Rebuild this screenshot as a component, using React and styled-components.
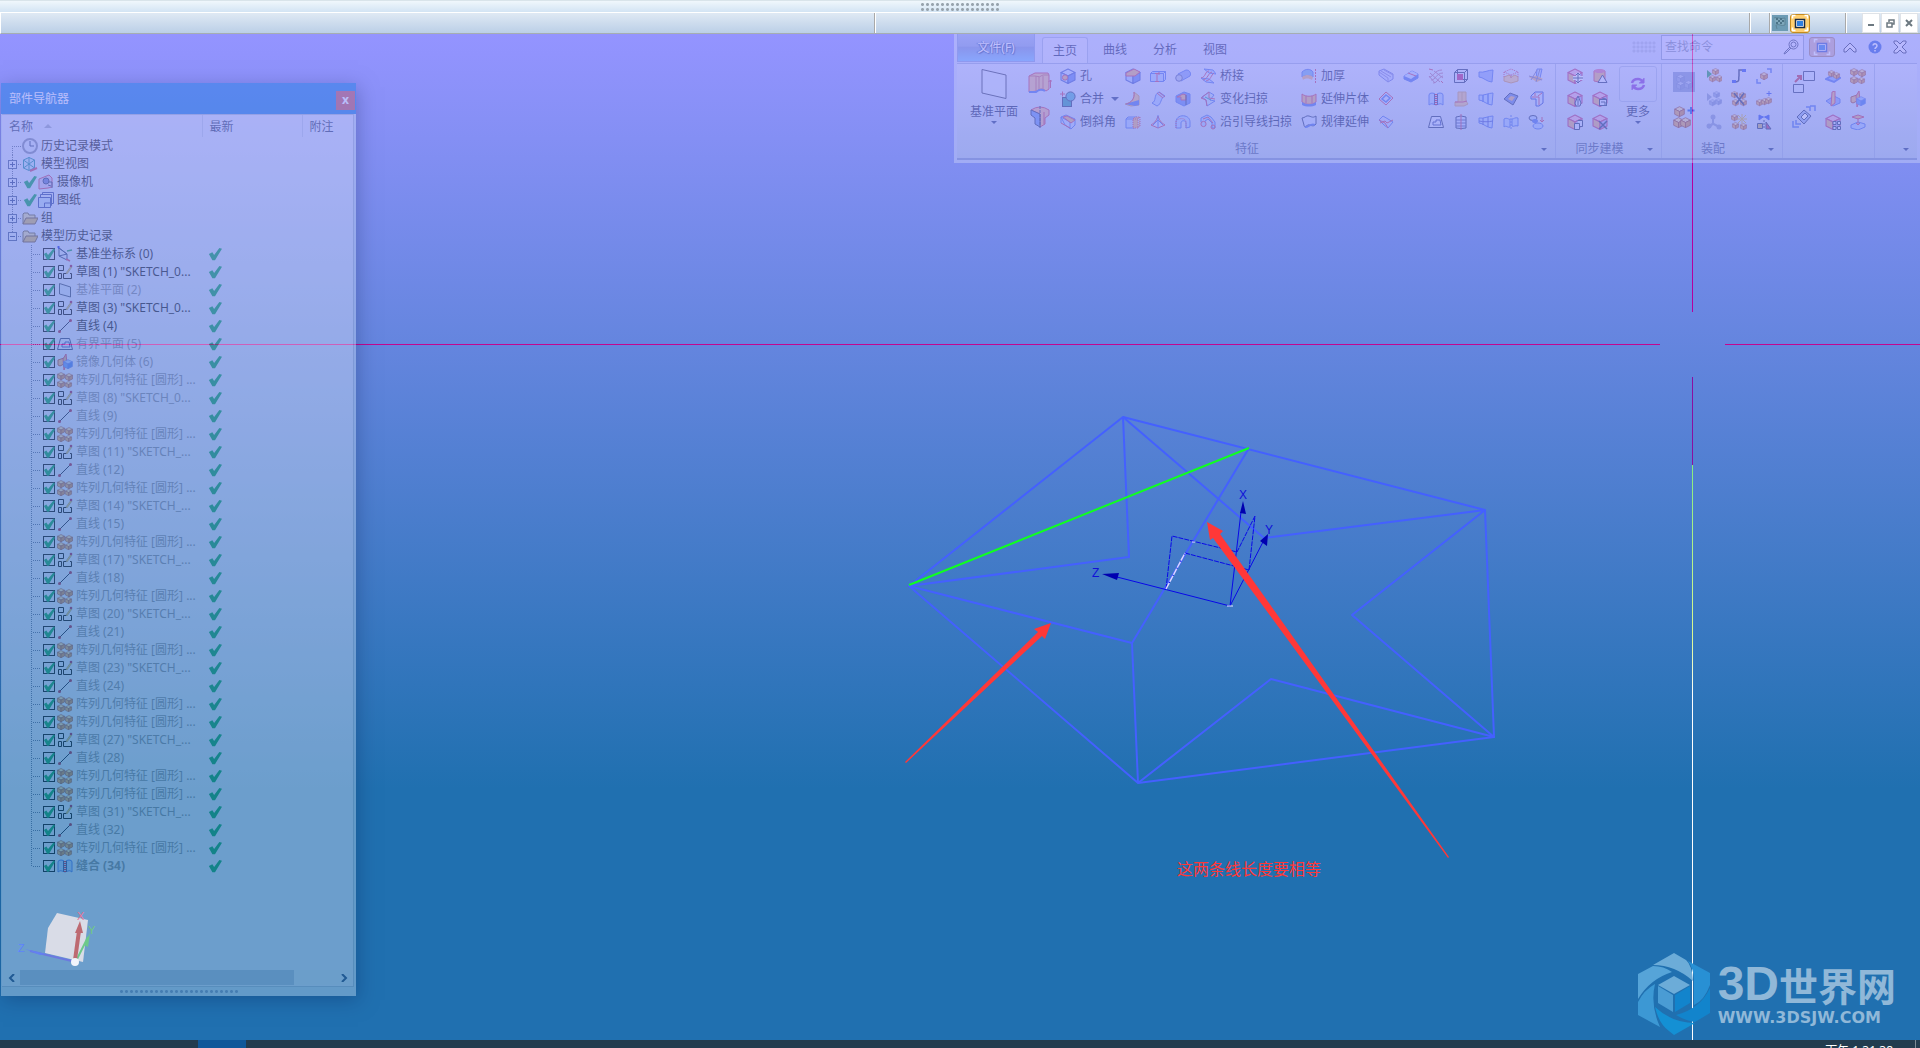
import React from "react";
import styled, { createGlobalStyle, css } from "styled-components";

const GlobalStyle = createGlobalStyle`
  * { box-sizing: border-box; }
  body {
    margin: 0;
    overflow: hidden;
    font-family: "Noto Sans", "Noto Sans CJK SC", sans-serif;
    font-size: 12px;
    line-height: 18px;
  }
  button, input { font: inherit; color: inherit; }
  button { background: none; border: 0; padding: 0; margin: 0; }
  svg { display: block; }
`;

/* ---------- frame ---------- */

const Page = styled.div`
  display: flex;
  flex-direction: column;
  height: 100vh;
`;

const TopStrip = styled.header`
  display: flex;
  justify-content: center;
  align-items: center;
  height: 12px;
  border-top: 1px solid #d9e4ea;
  background: linear-gradient(#f0f7fc, #d3e4f4);
`;

const Grip = styled.span`
  display: block;
  width: ${(p) => p.$cols * p.$step}px;
  height: ${(p) => p.$rows * p.$step}px;
  background-image: radial-gradient(circle, ${(p) => p.$color} 1px, transparent 2px);
  background-size: ${(p) => p.$step}px ${(p) => p.$step}px;
`;

const BarStrip = styled.div`
  display: flex;
  height: 22px;
  border-top: 1px solid #fff;
  border-left: 1px solid #fff;
  border-bottom: 1px solid #a5adb2;
  background: linear-gradient(#dfe9f4, #bbcfe7);
`;

const BarPane = styled.div`
  display: flex;
  align-items: center;
  gap: 2px;
  padding: 0 1px;
  flex: ${(p) => p.$flex || "none"};
  width: ${(p) => (p.$width ? p.$width + "px" : "auto")};
  border-right: ${(p) => (p.$last ? "0" : "1px solid #a9a9a9")};
  border-left: ${(p) => (p.$first ? "0" : "1px solid #fff")};
`;

const FlagButton = styled.button`
  width: 16px;
  height: 16px;
  background: #6d9bb4;
`;

const FullButton = styled.button`
  display: flex;
  align-items: center;
  justify-content: center;
  width: ${(p) => p.$w}px;
  height: ${(p) => p.$h}px;
  border: 1px solid ${(p) => p.$edge};
  border-radius: 3px;
  background: ${(p) => p.$fill};
`;

const WindowButtons = styled.div`
  display: flex;
  gap: 1px;
  padding-right: 2px;
`;

const WindowButton = styled.button`
  display: flex;
  align-items: center;
  justify-content: center;
  width: 18px;
  height: 20px;
  background: #fff;
  border: 1px solid #dfe3e8;
`;

const Viewport = styled.main`
  position: relative;
  flex: 1;
  min-height: 0;
  overflow: hidden;
  background: linear-gradient(#9494ff, #2070b0 75%);
`;

const Scene = styled.svg`
  position: absolute;
  inset: 0;
  width: 100%;
  height: 100%;
`;

const Note = styled.p`
  position: absolute;
  left: 1177px;
  top: 823px;
  margin: 0;
  font-size: 16px;
  line-height: 24px;
  color: #ff3838;
`;

const Watermark = styled.div`
  position: absolute;
  right: 24px;
  bottom: 5px;
  display: flex;
  align-items: center;
  gap: 8px;
`;

const WatermarkText = styled.div`
  display: flex;
  flex-direction: column;
  gap: 3px;
  color: #90b8d8;
  font-weight: 700;
`;

const WatermarkName = styled.span`
  display: flex;
  align-items: center;
  font-family: "Noto Sans CJK SC", sans-serif;
  font-size: 39px;
  line-height: 44px;
  b { font-family: "Liberation Sans", sans-serif; font-size: 48px; }
`;

const WatermarkUrl = styled.span`
  font-family: "DejaVu Sans", sans-serif;
  font-size: 16px;
  line-height: 18px;
`;

const Taskbar = styled.footer`
  display: flex;
  justify-content: flex-end;
  height: 8px;
  overflow: hidden;
  color: #fff;
  background: linear-gradient(90deg, #233c4f 198px, #10589a 198px, #10589a 246px, #233c4f 246px);
`;

const Clock = styled.time`
  font-size: 12px;
  line-height: 22px;
  padding-right: 22px;
  border-right: 1px solid #7d8b96;
  margin-right: 4px;
`;

/* ---------- part navigator ---------- */

const Navigator = styled.section`
  position: absolute;
  left: 1px;
  top: 49px;
  width: 355px;
  display: flex;
  flex-direction: column;
  opacity: 0.4;
  background: #c9d9ee;
  box-shadow: 2px 4px 18px rgba(0, 10, 60, 0.6);
`;

const NavTitle = styled.header`
  display: flex;
  align-items: center;
  justify-content: space-between;
  height: 31px;
  padding: 0 1px 0 8px;
  background: #0f7ade;
  color: #fff;
`;

const NavHeading = styled.h2`
  margin: 0;
  font-size: 12px;
  font-weight: 400;
`;

const CloseButton = styled.button`
  width: 19px;
  height: 19px;
  margin-top: 3px;
  line-height: 16px;
  background: #c75050;
  color: #fff;
  font-weight: 700;
`;

const NavBody = styled.div`
  margin: 0 2px 0 1px;
  height: 873px;
  display: flex;
  flex-direction: column;
  border: 1px solid #a9b9cf;
  border-left: 0;
  background: #dee4f8;
`;

const Tree = styled.table`
  width: 100%;
  table-layout: fixed;
  border-collapse: collapse;
`;

const HeadCell = styled.th`
  width: ${(p) => (p.$w ? p.$w + "px" : "auto")};
  height: 22px;
  padding: 2px 0 0 7px;
  font-weight: 400;
  text-align: left;
  color: #2a3a5c;
  border-right: ${(p) => (p.$last ? "0" : "1px solid #c0cbe2")};
`;

const SortMark = styled.span`
  display: inline-block;
  margin-left: 11px;
  vertical-align: 3px;
  border: 4px solid transparent;
  border-top: 0;
  border-bottom-color: #9aa4ba;
`;

const Cell = styled.td`
  height: 18px;
  padding: 0 0 0 ${(p) => p.$pad || 0}px;
  white-space: nowrap;
`;

const Node = styled.div`
  display: flex;
  align-items: center;
  height: 18px;
  color: ${(p) => (p.$dim ? "#828894" : "#101010")};
  font-weight: ${(p) => (p.$bold ? 700 : 400)};
`;

const NodeLabel = styled.label`
  margin-left: 3px;
  line-height: 18px;
`;

const Slot = styled.span`
  display: block;
  width: ${(p) => p.$w || 16}px;
  margin-left: ${(p) => p.$gap || 0}px;
`;

const Tick = styled.input`
  appearance: none;
  position: relative;
  width: 12px;
  height: 12px;
  margin: 0;
  border: 1px solid #000;
  &::before {
    content: "";
    position: absolute;
    inset: -1px;
    background: #00a050;
    clip-path: polygon(8% 50%, 28% 38%, 42% 58%, 88% 4%, 100% 14%, 50% 98%, 34% 98%);
  }
`;

const TriadArea = styled.div`
  margin-top: auto;
  padding-left: 14px;
`;

const ScrollRow = styled.div`
  display: flex;
  align-items: center;
  height: 15px;
  margin: 0 1px 1px;
  background: #dbe3f3;
`;

const ScrollTrack = styled.div`
  flex: 1;
  height: 15px;
  display: flex;
`;

const ScrollThumb = styled.div`
  width: 87%;
  background: #b1bed6;
`;

const ScrollButton = styled.button`
  width: 17px;
  height: 15px;
  display: flex;
  align-items: center;
  justify-content: center;
`;

const NavFoot = styled.footer`
  display: flex;
  justify-content: center;
  align-items: center;
  height: 9px;
`;

/* ---------- ribbon ---------- */

const Ribbon = styled.section`
  position: absolute;
  left: 954px;
  right: 0;
  top: 0;
  padding: 0 3px 3px;
  opacity: 0.4;
  background: #d3dafa;
  color: #1c2c5c;
`;

const TabRow = styled.nav`
  display: flex;
  align-items: flex-end;
  height: 29px;
`;

const FileButton = styled.button`
  align-self: flex-start;
  width: 78px;
  height: 28px;
  margin-right: 7px;
  color: #fff;
  text-shadow: 1px 1px 1px #23408a, -1px 0 1px #23408a;
  border: 1px solid #8ca3dc;
  border-top: 0;
  background: linear-gradient(#a5b8ea, #92a9dd 45%, #7f98d4 50%, #7fc4ff);
`;

const Tab = styled.button`
  width: ${(p) => (p.$active ? 46 : 50)}px;
  height: 26px;
  line-height: 24px;
  ${(p) =>
    p.$active &&
    css`
      margin-right: 2px;
      border: 1px solid #a9b6dc;
      border-bottom: 0;
      border-radius: 3px 3px 0 0;
      background: #e1e3fb;
      line-height: 22px;
    `}
`;

const TabTools = styled.div`
  display: flex;
  align-items: center;
  gap: 5px;
  margin-left: auto;
  height: 29px;
  padding: 0 7px 3px 0;
`;

const SearchBox = styled.div`
  display: flex;
  align-items: center;
  width: 143px;
  height: 25px;
  padding: 0 4px 0 3px;
  border: 1px solid #93a1c9;
  background: #e6e6ff;
  input {
    flex: 1;
    min-width: 0;
    padding: 0;
    border: 0;
    background: none;
    outline: none;
  }
  input::placeholder { color: #8088a8; opacity: 1; }
`;

const ToolButton = styled.button`
  display: flex;
  align-items: center;
  justify-content: center;
  width: 20px;
  height: 20px;
`;

const Groups = styled.div`
  display: flex;
  height: 97px;
  border-top: 1px solid #a3b0da;
  border-bottom: 2px solid #8b9ccc;
  background: linear-gradient(#dfe3fb, #c6d3ec);
`;

const Group = styled.div`
  flex: ${(p) => (p.$grow ? "1" : "none")};
  display: flex;
  flex-direction: column;
  gap: 6px;
  border-right: ${(p) => (p.$grow ? "0" : "1px solid #aebbe0")};
`;

const GroupBody = styled.div`
  display: flex;
  align-items: flex-start;
  height: 70px;
  gap: ${(p) => p.$gap || 0}px;
  padding: 0 ${(p) => p.$right || 0}px 0 ${(p) => p.$left || 0}px;
`;

const GroupFoot = styled.div`
  display: flex;
  align-items: center;
  height: 18px;
  padding-right: 8px;
  color: #4a5a8a;
  span { flex: 1; text-align: center; padding-right: 4px; }
`;

const Caret = styled.i`
  display: inline-block;
  border: ${(p) => p.$s || 3}px solid transparent;
  border-bottom: 0;
  border-top-color: #2a3f80;
`;

const TallButton = styled.button`
  display: flex;
  flex-direction: column;
  align-items: center;
  width: ${(p) => p.$w}px;
  height: 70px;
  padding-top: 2px;
`;

const TallIcon = styled.span`
  display: flex;
  align-items: center;
  justify-content: center;
  width: 38px;
  height: 36px;
  margin-bottom: 1px;
  border-radius: 3px;
  border: 1px solid ${(p) => (p.$framed ? "#b3bfe2" : "transparent")};
`;

const BigColumn = styled.div`
  display: flex;
  flex-direction: column;
  width: ${(p) => p.$w}px;
  button { display: flex; justify-content: center; align-items: center; height: 35px; }
`;

const Labeled = styled.div`
  display: flex;
  flex-direction: column;
  width: ${(p) => p.$w}px;
`;

const LabeledButton = styled.button`
  display: flex;
  align-items: center;
  height: 23px;
  white-space: nowrap;
  svg { margin: 0 4px 0 5px; }
  i { margin-left: 7px; }
`;

const IconGrid = styled.div`
  display: grid;
  grid-auto-flow: column;
  grid-template-rows: repeat(3, 23px);
  grid-auto-columns: 25px;
  button { display: flex; align-items: center; justify-content: center; }
`;

/* ---------- icon drawings ---------- */

const B = "#4f74e8";
const BL = "#b4ccff";
const OR = "#ecb27c";
const RD = "#cc4468";
const NV = "#2a3c6c";

const Cube = ({ x = 0, y = 0, s = 16, top = "#cfdcff", left = BL, right = "#6688f0", line = "#4560c8" }) => (
  <g transform={`translate(${x} ${y}) scale(${s / 16})`} stroke={line} strokeWidth="1.100" strokeLinejoin="round">
    <path d="M1 4.500 8 1l7 3.500L8 8z" fill={top} />
    <path d="M1 4.500 8 8v7.500L1 12z" fill={left} />
    <path d="M15 4.500 8 8v7.500l7-3.500z" fill={right} />
  </g>
);
const OCube = (p) => <Cube top="#f8dca8" left="#e6a860" right="#d48c4c" line="#94402c" {...p} />;
const PCube = (p) => <Cube top="#f3b6d8" left="#e8b080" right="#b0a8ec" line="#c0407c" {...p} />;
const GCube = (p) => <Cube top="#b7c3e6" left="#98a8d6" right="#8494c8" line="#7888c0" {...p} />;

const icons = {
  hole: <><Cube /><circle cx="5" cy="9.500" r="2.600" fill={OR} stroke={RD} /></>,
  unite: <><rect x="2.500" y="6.500" width="9" height="9" fill="#2f9aa8" stroke={NV} /><circle cx="10.500" cy="5.500" r="4.600" fill="#4fb0d0" stroke={NV} /><path d="M0 3h5M2.500 .5v5" stroke={RD} /></>,
  chamfer: <><path d="M1 3 6 1l9 4v6l-4 4-6-4z" fill="#c4d4ff" stroke={B} /><path d="m1 3 9 5 5-3M10 8v7M1 3v6" fill="none" stroke={B} /><path d="M3 3 7 2l8 4-4 3zM1 9l9 5" fill={OR} stroke={RD} /></>,
  edge: <><Cube /><path d="m1 5 8-4 6 3-5 4H1z" fill={OR} stroke={RD} /></>,
  face: <><path d="M9 1c1 7-3 11-9 12l6 2 8-1V5z" fill="#f1c08a" stroke="#d09860" /><path d="M0 13l10 2 4-1V9z" fill={B} /><path d="M9 1c1 7-3 11-8 12" fill="none" stroke={RD} /></>,
  shell: <><path d="M1 5h9v9H1zM1 5l2-2h9l-2 2" fill={BL} stroke={B} /><path d="M8 5h5v9H8zM8 5l2-2h5l-2 2M15 3v9l-2 2" fill={OR} stroke={RD} strokeDasharray="1 1" /></>,
  thread: <><path d="M.5 5.500h13v8H.5zM.5 5.500l2-2h13l-2 2M15.500 3.500v8l-2 2" fill={BL} stroke={B} /><path d="M5 5.500h4M5 13.500h4M7 6v7M9 4v3" stroke={RD} /></>,
  draft: <><path d="M2 12C7 10 3 4 9 1l6 4c-5 2-3 8-8 10z" fill={BL} stroke={B} /><path d="m7 2 6 5M9 1l6 5" stroke={RD} /></>,
  cone: <><path d="M8 2C6 8 4 9 1 11l7 3 7-3C12 9 10 8 8 2z" fill="#d4dcff" stroke={RD} /><path d="M8 1v13M3 11l5-5 5 5" fill="none" stroke={B} /></>,
  tube: <><path d="M3 6 11 2a4 4 0 0 1 4 6l-9 5z" fill="#8fa8f4" stroke={B} /><circle cx="4" cy="10" r="3.300" fill="#b9c4e8" stroke="#5a68a8" /></>,
  pocket: <><path d="M1 5l8-4 6 2v9l-6 3-8-4z" fill="#6a8cf0" stroke={B} /><path d="M2 6h4v3h5V4l-3-1z" fill={OR} stroke={RD} /><path d="M11 4v10" stroke={NV} /></>,
  arch: <><path d="M1 14V8c0-5 5-7 9-6s5 4 5 6v5l-4 1V9c0-3-5-3-5 0v5z" fill={BL} stroke={B} /><path d="M1 14V8c0-4 10-5 10 0v6" fill="none" stroke={RD} strokeDasharray="1 1" /></>,
  bridge: <><path d="M4 1l9 1 3 4-7-1zM1 10l8 1 5 4-8-1z" fill={BL} stroke={B} /><path d="M1 10C6 9 5 3 9 3M3 12c5-1 5-7 9-8M6 13c5-1 5-6 8-8" fill="none" stroke={RD} /></>,
  variational: <><path d="M2 6 9 1l5 3-4 5 5 1-8 5-1-6z" fill="#c4daf4" stroke={B} /><path d="m1 7 8-6v6l6 1M1 7l5 2 1 6" fill="none" stroke={RD} /><path d="M5 6l6 3" stroke="#209a9a" /></>,
  sweep: <><path d="M1 8V4l6-3 4 2 4 5v6h-3V9L8 5 5 7v4z" fill={BL} stroke={B} /><circle cx="3.500" cy="10" r="2.600" fill={BL} stroke={RD} /><path d="M3 5 8 3l5 6" fill="none" stroke={RD} /><circle cx="13" cy="13" r="2" fill="none" stroke={RD} /></>,
  thicken: <><path d="M1 4c4-4 9-3 11 0v5C9 7 4 7 1 9z" fill="#7ab0e8" stroke={B} /><path d="M1 9c4-3 9-2 11 0l-1 3C8 10 4 10 2 12z" fill={OR} /><path d="M14.500 1v14" stroke={RD} strokeDasharray="2 1" /></>,
  extend: <><path d="M1 3c4 3 10 3 14 0v8c-4 3-10 3-14 0z" fill={OR} stroke={RD} /><path d="M1 11c4 3 10 3 14 0v3c-4 2-10 2-14 0z" fill={B} /><path d="M5 5v7M11 5v7" stroke={RD} /></>,
  law: <><path d="M1 4c3 0 4-3 7-2s4 2 7 0v8c-3 4-6 0-8 1s-4 3-4 0z" fill="#d0dcff" stroke={NV} /><path d="M4 13c3 1 5-4 10-2" fill="none" stroke={B} strokeWidth="2" /></>,
  sheet: <><path d="M1 7V3l5-2 9 5v5l-5 3z" fill="#c8d2ff" stroke="#6a78d8" /><path d="m1 4 9 6v4M6 2l9 5M3 3l10 6" fill="none" stroke="#8888d4" /></>,
  diamond: <><path d="M8 1l7 6-7 7-7-6z" fill="#d4dcff" stroke={RD} /><path d="M8 4l4 3-4 4-4-3z" fill="none" stroke={B} strokeWidth="1.500" /></>,
  twist: <><path d="M1 6l4-4 5 3 5 3-5 6-4-3z" fill="#c8d2ff" stroke={B} /><path d="m2 9 5-2 2 2 6-3M1 6l6 3 3 5" fill="none" stroke={RD} /></>,
  slab: <><path d="M1 8l8-5 6 3v4l-7 4-7-3z" fill={B} stroke={B} /><path d="m1 8 8-5 6 3-7 5z" fill="#c8d8ff" /><path d="m5 5 8 3" stroke={RD} /></>,
  mesh: <><path d="M1 9c5 0 5-7 13-7M3 12c5 0 5-7 12-7M5 15c5 0 5-6 10-7M2 5l10 9M6 3l9 7M1 8l6 7" fill="none" stroke="#b4789c" /><path d="m1 1 4 1M13 13l2 2" stroke={RD} /></>,
  sew: <><path d="M1 14V4q0-2 3-2t4 2q1-2 4-2t3 2v10q-2-2-4-1l-3 1-3-1q-2-1-4 1z" fill={BL} stroke={B} /><path d="M6.500 3v11M9.500 3v11" stroke="#404a90" /><path d="M8 3v11" stroke="#c81e46" strokeWidth="2" strokeDasharray="1 1" /></>,
  bounded: <><path d="M3.500 2.500h9l3 11H.5z" fill="#dfe6ff" stroke={NV} /><path d="M5 11V8h3V6h4l1 5z" fill="none" stroke="#3448a0" /></>,
  wirecube: <><path d="M1.500 4.500h10v10h-10zM4.500 1.500h10v10h-10zM1.500 4.500l3-3M11.500 4.500l3-3M11.500 14.500l3-3" fill="none" stroke={NV} /><rect x="4" y="6" width="6" height="6" fill="#c0287c" /></>,
  boot: <><path d="M5 1h8v9l2 3-4 2H2v-4h3z" fill="#f0c494" stroke="#cfa070" /><path d="M2 11h8l4-1" fill="none" stroke={RD} /><path d="M9 1v9" stroke="#cfa070" /></>,
  barrel: <><path d="M3 3q5-2 10 0v11q-5 1-10 0z" fill="#ccd8ff" stroke={NV} /><path d="M3 6h10M3 9h10M3 12h10" stroke="#4a5aa0" /><path d="M8 0v16" stroke={RD} /></>,
  surf1: <path d="M1 4c5 1 9-2 14-2l-1 12C9 14 5 9 1 9z" fill="#9ab0fa" stroke={B} />,
  surf2: <><path d="M1 4c5 1 9-2 14-2l-1 12C9 14 5 9 1 9z" fill={BL} stroke={B} /><path d="M5 4v7M10 3v10" stroke={B} strokeWidth="1.500" /></>,
  surf3: <><path d="M1 4c5 1 9-2 14-2l-1 12C9 14 5 9 1 9z" fill={BL} stroke={B} /><path d="M5 4v7M10 3v10M1 7c5 1 9 1 14 0" fill="none" stroke="#4a5ac8" /></>,
  dashbox: <><path d="M1 9l5-2 2 2 4-2 3 2v4l-7 2-7-2z" fill="#f4cc9c" stroke="#d89858" /><path d="M1 9V4l7-3 7 3v5M1 4l7 3 7-3M8 7v3" fill="none" stroke={RD} strokeDasharray="1 1" /></>,
  patch: <><path d="M1 8 7 2l8 3-5 9z" fill="#6a84d8" stroke={NV} /><path d="m5 8 3-3 4 1-3 4z" fill={OR} /></>,
  mirror: <><path d="M1 5c3-2 5 1 6 0v8c-2 1-4-2-6 0zM9 5c2 0 3-2 6-1v8c-3-1-4 1-6 0z" fill={BL} stroke={B} /><path d="M8 1v14" stroke={B} strokeDasharray="2 1" /></>,
  pipe: <><path d="M9 1h5l-2 9-4 2z" fill={BL} stroke={B} /><path d="M1 9l8-1 6 3-6 3z" fill={OR} /><path d="M3 12 9 2M8 14l4-13M1 8l13 4" stroke="#7878b0" /></>,
  frame: <><path d="M3 5 7 1h8v11l-4 3H8V8H3z" fill="#d0dcff" stroke="#2c48c8" /><path d="M4 6h7v8M7 2v3M10 5l4-3" fill="none" stroke={RD} /></>,
  discs: <><ellipse cx="5" cy="4" rx="4" ry="2.500" fill={BL} stroke={NV} /><ellipse cx="10" cy="12" rx="5" ry="3" fill={BL} stroke={B} /><ellipse cx="7" cy="7" rx="3" ry="2" fill={B} /><path d="M14 3v5m-2-2 2 2 2-2" stroke={RD} fill="none" /></>,
  moveFace: <><PCube /><path d="M11 5v10M6 10h10" stroke="#fff" strokeWidth="4" /><path d="M11 5v10M6 10h10m-7-3 2-2 2 2m-4 6 2 2 2-2" fill="none" stroke={NV} /></>,
  pullFace: <><PCube /><path d="M8 12l3-7 3 7-1 3H9zM11 8v6" fill="#dfe3ff" stroke={NV} /></>,
  copyFace: <><PCube /><path d="M7.500 9.500h5v6h-5zM10.500 6.500h5v6h-3" fill="#dfe3ff" stroke={NV} /></>,
  deltaFace: <><path d="M2 3q6-3 11 0v10q-6 2-11 0z" fill={OR} stroke={RD} /><ellipse cx="7.500" cy="3" rx="5.500" ry="2" fill="#e070a0" /><path d="M6 14.500h9L10.500 7z" fill="#eceeff" stroke={NV} /></>,
  replace: <><PCube /><rect x="7.500" y="8.500" width="7" height="6" fill="#dfe3ff" stroke={NV} /><path d="M9 11h4v3M10 7l4 1" fill="none" stroke={NV} /></>,
  deleteFace: <><PCube /><path d="m7 7 8 8M15 7l-8 8" stroke={NV} strokeWidth="1.500" /></>,
  asm: <><path d="M1 2v8l5-4z" fill="#1f9a58" /><OCube x={6} y={0} s={7} /><OCube x={3} y={7} s={7} /><OCube x={10} y={7} s={7} /></>,
  asmGrey: <><path d="M1 2v8l5-4z" fill="#8d9bc8" /><GCube x={7} y={0} s={7} /><GCube x={3} y={8} s={7} /><GCube x={9} y={7} s={7} /></>,
  joint: <g fill="#8d9bcc"><circle cx="7" cy="3" r="2.500" /><path d="M6 4h2v5l6 3-1 2-6-3-4 4-2-3 5-3z" /><circle cx="13" cy="13" r="2.500" /><circle cx="3" cy="12" r="2.500" /></g>,
  pathline: <><path d="M3 14c7 0 4-3 5-6V2h6" fill="none" stroke={NV} strokeWidth="1.500" /><path d="M1 12h4v3H1zM11 1h4v3h-4z" fill="#2f50e8" /></>,
  cut: <><OCube x={0} y={0} s={7} /><OCube x={8} y={1} s={7} /><OCube x={1} y={8} s={7} /><OCube x={9} y={8} s={7} /><path d="m3 2 10 12M13 2 5 13" stroke={NV} strokeWidth="1.500" /></>,
  spark: <><OCube x={0} y={0} s={7} /><OCube x={9} y={9} s={7} /><OCube x={1} y={8} s={7} /><path d="M11 0v10M6 5h10M7 1l8 8M15 1 7 9" stroke="#d8b848" /></>,
  focus: <><OCube x={4} y={4} s={8} /><path d="M11 1h4v4M1 11v4h4" fill="none" stroke={B} strokeWidth="1.500" /></>,
  addRow: <><OCube x={0} y={8} s={7} /><OCube x={5} y={7} s={7} /><OCube x={9} y={6} s={7} /><path d="M13 0v5M10.500 2.500h5" stroke="#2f50e8" /></>,
  mirrorAsm: <><path d="M1.500 9.500h5v5h-5z" fill="#c8b070" stroke={NV} /><path d="M10 15V8l5 7z" fill="#c0386c" stroke={NV} /><path d="M8 6v9" stroke={NV} strokeDasharray="2 1" /><path d="M3 1l4 2-4 3zM13 1 9 3l4 3zM4 3h8" fill="#2f50e8" stroke="#2f50e8" /></>,
  arrange: <><path d="M1 11l7-4 7 3-6 4z" fill="#8fb0ff" stroke={B} strokeWidth="2" /><OCube x={3} y={2} s={7} /><OCube x={8} y={4} s={7} /></>,
  mirrorBody: <><path d="M1 10l8-5 6 3v4l-7 3z" fill="#8fa8f8" stroke={B} /><path d="M7 1l3-1v12l-4 3z" fill="#f4b880" stroke={RD} /></>,
  mirrorGeo: <><path d="M1 6l6-2v6l-4 2-2-1z" fill={OR} stroke="#a85038" /><path d="M6 5l3-5 1 9-3 7z" fill="#d8a878" stroke={RD} /><Cube x={6} y={5} s={10} top="#9fc0ff" left="#5f94f4" right="#3f78e8" line={B} /></>,
  patternFace: <><PCube /><path d="M8 7.500h3v3H8zM12.500 7.500h3v3h-3zM8 12.500h3v3H8zM12.500 12.500h3v3h-3z" fill="#dfe3ff" stroke={NV} strokeWidth="1" /></>,
  lift: <><path d="M1 11l7-3 7 2v3l-7 3-7-2z" fill={BL} stroke={B} /><path d="M2 3l6-2 6 2-6 2z" fill={OR} stroke={RD} /><path d="M8 4v7m-2-2 2 2 2-2" fill="none" stroke={RD} /></>,
  pattern: <><OCube x={0} y={0} s={8} /><OCube x={8} y={1} s={8} /><OCube x={0} y={8} s={8} /><OCube x={8} y={9} s={7} /></>,
  clock: <><circle cx="8" cy="8" r="7" fill="#dbe3f6" stroke="#7f88a4" strokeWidth="2" /><path d="M8 3v5h4" fill="none" stroke={NV} /></>,
  modelview: <><path d="M1.500 4 7 1.500 12.500 4v8L7 14.500 1.500 12zM1.500 4l11 8M12.500 4l-11 8M7 1v13" fill="#c8e4f4" stroke="#1a8c9c" /><path d="m8 15 7-3" stroke={RD} strokeWidth="2" /></>,
  camera: <><path d="M1 5l10-4 3 3v9l-4 1-9 1z" fill="#d8c8e8" stroke={RD} /><circle cx="8" cy="7" r="3" fill="#6a78c8" stroke={NV} /><path d="M10 8h4v6M10 11l3 1" fill="none" stroke={NV} /></>,
  drawing: <><path d="M4.500 3V.5h11v11H14M2.500 5V2.500h11v11h-1" fill="none" stroke="#34489c" /><path d="M.5 5.500h12v10H.5z" fill="#c7dcf8" stroke="#34489c" /><path d="M6.500 15v-4h6" fill="none" stroke="#34489c" /></>,
  folder: <><path d="M1 14V4l1-1h4l1 2h6v3" fill="#e8dca8" stroke="#6e6442" /><path d="M1 14 4 8h12l-3 6z" fill="#d9b860" stroke="#6e5432" /></>,
  csys: <><path d="M2 2v8l8-2zM2 10l8 4V8M2 2l8 6" fill="none" stroke={NV} /><path d="m10 5 5-1" stroke="#1f9a58" strokeWidth="1.500" /><path d="m9 13 4 2" stroke={RD} strokeWidth="1.500" /><path d="M0 1h3M1.500 0v3" stroke="#2030e0" /></>,
  sketch: <><path d="M1.500 1.500h5v5h-5zM1.500 9.500h3v5h-3zM6.500 14.500v-5h3M13 9.500h1.500v5h-8" fill="none" stroke="#000" /><path d="m9 9 5-7 1 1-5 7z" fill="#e0c060" stroke="#807840" strokeWidth=".5" /><circle cx="14" cy="2" r="1.300" fill="#a02050" /></>,
  plane: <path d="M2.500 1.500 13.500 5v10L2.500 12z" fill="#d2dff6" stroke="#3c4a66" />,
  line: <><path d="M3 13 13 3" stroke="#101830" /><circle cx="2.500" cy="13.500" r="1.500" fill="#a82040" /><circle cx="13.500" cy="2.500" r="1.500" fill="#a82040" /></>,
  check: <path d="M1 8 5 6l2 3L13 1l3 1L8 15H5z" fill="#00a050" />,
};

const Icon = ({ name, size = 16 }) => (
  <svg width={size} height={size} viewBox="0 0 16 16" fill="none" aria-hidden="true">
    {icons[name]}
  </svg>
);

const FullGlyph = ({ frame = "#1a2a44" }) => (
  <svg width="18" height="18" viewBox="0 0 18 18">
    <path d="M1.500 4.500v-3h3M13.500 1.500h3v3M16.500 13.500v3h-3M4.500 16.500h-3v-3" fill="none" stroke="#fff" strokeWidth="1.500" />
    <rect x="4.500" y="5.500" width="9" height="8" fill="#fff" stroke={frame} strokeWidth="1.500" />
    <rect x="6" y="7" width="6" height="5" fill="#2f7fe0" />
  </svg>
);

/* ---------- ribbon content ---------- */

const featureLabels1 = [["hole", "孔"], ["unite", "合并", true], ["chamfer", "倒斜角"]];
const featureIcons1 = ["edge", "face", "shell", "thread", "draft", "cone", "tube", "pocket", "arch"];
const featureLabels2 = [["bridge", "桥接"], ["variational", "变化扫掠"], ["sweep", "沿引导线扫掠"]];
const featureLabels3 = [["thicken", "加厚"], ["extend", "延伸片体"], ["law", "规律延伸"]];
const featureIcons2 = [
  "sheet", "diamond", "twist", "slab", null, null, "mesh", "sew", "bounded", "wirecube", "boot", "barrel",
  "surf1", "surf2", "surf3", "dashbox", "patch", "mirror", "pipe", "frame", "discs",
];
const syncIcons = ["moveFace", "pullFace", "copyFace", "deltaFace", "replace", "deleteFace"];
const asmIcons = ["asm", "asmGrey", "joint", "pathline", "cut", "spark", "focus", "addRow", "mirrorAsm"];
const extraIcons = ["arrange", "mirrorBody", "patternFace", "pattern", "mirrorGeo", "lift"];

const Icons = ({ list }) => (
  <IconGrid>
    {list.map((n, i) => (n ? <button key={i} aria-label={n}><Icon name={n} /></button> : <span key={i} />))}
  </IconGrid>
);

const Labels = ({ list, w }) => (
  <Labeled $w={w}>
    {list.map(([icon, text, drop]) => (
      <LabeledButton key={text}><Icon name={icon} />{text}{drop && <Caret $s={4} />}</LabeledButton>
    ))}
  </Labeled>
);

const RibbonBar = () => (
  <Ribbon>
    <TabRow>
      <FileButton>文件(F)</FileButton>
      <Tab $active>主页</Tab>
      <Tab>曲线</Tab>
      <Tab>分析</Tab>
      <Tab>视图</Tab>
      <TabTools>
        <Grip $cols={6} $rows={3} $step={4} $color="#b4bcdc" />
        <SearchBox>
          <input aria-label="查找命令" placeholder="查找命令" />
          <svg width="16" height="16" viewBox="0 0 16 16" fill="none" stroke="#3c4670">
            <circle cx="10.500" cy="5.500" r="4.500" /><circle cx="10.500" cy="5.500" r="2.500" /><path d="m7 8-5 5-1 2 2-1 5-5" />
          </svg>
        </SearchBox>
        <FullButton $w={26} $h={20} $edge="#a88470" $fill="#d4b0b0" aria-label="全屏"><FullGlyph frame="#3a58c0" /></FullButton>
        <ToolButton aria-label="最小化功能区">
          <svg width="14" height="12" viewBox="0 0 14 12" fill="#eef" stroke="#2c3760" strokeWidth="1"><path d="m1 8 6-6 6 6v3H11L7 7l-4 4H1z" /></svg>
        </ToolButton>
        <ToolButton aria-label="帮助">
          <svg width="14" height="14" viewBox="0 0 14 14"><circle cx="7" cy="7" r="6.500" fill="#2d5ed8" /><path d="M5 5.500a2 2 0 1 1 3 2q-1 .5-1 1.500M7 10v1.500" fill="none" stroke="#fff" strokeWidth="1.500" /></svg>
        </ToolButton>
        <ToolButton aria-label="关闭">
          <svg width="14" height="14" viewBox="0 0 14 14" fill="#eef" stroke="#2c3760"><path d="M1 1h3l3 3 3-3h3v2L9 7l4 4v2h-3l-3-3-3 3H1v-2l4-4-4-4z" /></svg>
        </ToolButton>
      </TabTools>
    </TabRow>
    <Groups>
      <Group>
        <GroupBody $left={6} $right={7}>
          <TallButton $w={62}>
            <TallIcon><svg width="26" height="32" viewBox="0 0 26 32"><path d="M1 1.500 25 7v23.500L1 25z" fill="#dfe6fa" stroke="#3b4360" /></svg></TallIcon>
            基准平面
            <Caret />
          </TallButton>
          <BigColumn $w={30}>
            <button aria-label="拉伸">
              <svg width="24" height="22" viewBox="0 0 24 22" fill="none">
                <path d="M1 5l6-3h13l1 2v14l-3 2q-5-4-9 0l-8 1z" fill="#f4bc98" stroke={RD} />
                <path d="M1 5h6q5 2 8-1l6 0M8 5v15M11 6v13M15 5v13" stroke="#cc6868" /><path d="M22.500 9v8m-2-6 2-2 2 2" stroke={RD} />
                <path d="M1 21h7q4-4 9-1" stroke={B} strokeWidth="2" />
              </svg>
            </button>
            <button aria-label="旋转">
              <svg width="20" height="22" viewBox="0 0 20 22" fill="none">
                <path d="M1 4q9-6 18 0v5l-4 3v6l-5 3V8z" fill="#f4b49c" stroke={RD} />
                <path d="M1 4l9 4v13l-5-3v-6L1 9z" fill="#6f96f2" stroke={NV} /><path d="M10 0v22" stroke={NV} strokeDasharray="3 1" /><path d="M14 6v12" stroke={RD} />
              </svg>
            </button>
          </BigColumn>
          <Labels list={featureLabels1} w={65} />
          <Icons list={featureIcons1} />
          <Labels list={featureLabels2} w={101} />
          <Labels list={featureLabels3} w={77} />
          <Icons list={featureIcons2} />
        </GroupBody>
        <GroupFoot><span>特征</span><Caret /></GroupFoot>
      </Group>
      <Group>
        <GroupBody $left={6} $right={3} $gap={6}>
          <Icons list={syncIcons} />
          <TallButton $w={40}>
            <TallIcon $framed>
              <svg width="16" height="14" viewBox="0 0 16 14" fill="none" stroke="#8a3fd0" strokeWidth="2.500"><path d="M2 6q1-4 6-4 3 0 5 3M14 8q-1 4-6 4-3 0-5-3" /><path d="M14 1v5H9M2 13V8h5" fill="#8a3fd0" strokeWidth="1" /></svg>
            </TallIcon>
            更多
            <Caret />
          </TallButton>
        </GroupBody>
        <GroupFoot><span>同步建模</span><Caret /></GroupFoot>
      </Group>
      <Group>
        <GroupBody $left={8} $right={6} $gap={3}>
          <BigColumn $w={28}>
            <button aria-label="装配部件">
              <svg width="22" height="20" viewBox="0 0 22 20"><rect width="22" height="20" fill="#8a9bcc" /><GCube x={3} y={2} s={9} /><GCube x={3} y={9} s={9} /><GCube x={11} y={8} s={9} /></svg>
            </button>
            <button aria-label="添加组件">
              <svg width="22" height="22" viewBox="0 0 22 22"><OCube x={1} y={0} s={11} /><OCube x={0} y={11} s={11} /><OCube x={7} y={11} s={11} /><path d="M18 1v7M14.500 4.500h7" stroke="#1455e0" strokeWidth="2" /></svg>
            </button>
          </BigColumn>
          <Icons list={asmIcons} />
        </GroupBody>
        <GroupFoot><span>装配</span><Caret /></GroupFoot>
      </Group>
      <Group>
        <GroupBody $left={8} $right={4} $gap={3}>
          <BigColumn $w={26}>
            <button aria-label="移动组件">
              <svg width="24" height="24" viewBox="0 0 24 24" fill="#dbe5fb" stroke="#33436e"><path d="M11.500 1.500h11v9h-11zM1.500 14.500h10v8h-10z" /><path d="M3 12 9 6M5 6h4v4" fill="none" stroke="#c0384c" strokeWidth="2" /></svg>
            </button>
            <button aria-label="装配约束">
              <svg width="24" height="24" viewBox="0 0 24 24" fill="none" stroke={B}><path d="m5 12 7-7 7 6-7 8z" fill="#9db4ec" stroke={NV} /><path d="m9 12 4-4 3 3-4 4z" fill="#fff" stroke={NV} /><path d="M14 2h4v4M18 1h5v5M1 16v6h6M4 15v4h5" strokeWidth="1.500" /></svg>
            </button>
          </BigColumn>
          <Icons list={extraIcons} />
        </GroupBody>
        <GroupFoot />
      </Group>
      <Group $grow>
        <GroupBody />
        <GroupFoot><span /><Caret /></GroupFoot>
      </Group>
    </Groups>
  </Ribbon>
);

/* ---------- tree content ---------- */

const roots = [
  { label: "历史记录模式", icon: "clock" },
  { label: "模型视图", icon: "modelview", sign: "+" },
  { label: "摄像机", icon: "camera", sign: "+", checked: true },
  { label: "图纸", icon: "drawing", sign: "+", checked: true },
  { label: "组", icon: "folder", sign: "+" },
  { label: "模型历史记录", icon: "folder", sign: "-" },
];

const sketch = (n, tail) => ({ icon: "sketch", label: `草图 (${n}) "SKETCH_${tail || ""}...`, dim: true });
const line = (n) => ({ icon: "line", label: `直线 (${n})`, dim: true });
const pattern = () => ({ icon: "pattern", label: "阵列几何特征 [圆形] ...", dim: true });

const features = [
  { icon: "csys", label: "基准坐标系 (0)" },
  { ...sketch(1, "0"), dim: false },
  { icon: "plane", label: "基准平面 (2)", dim: true },
  { ...sketch(3, "0"), dim: false },
  { ...line(4), dim: false },
  { icon: "bounded", label: "有界平面 (5)", dim: true },
  { icon: "mirrorGeo", label: "镜像几何体 (6)", dim: true },
  pattern(), sketch(8, "0"), line(9),
  pattern(), sketch(11), line(12),
  pattern(), sketch(14), line(15),
  pattern(), sketch(17), line(18),
  pattern(), sketch(20), line(21),
  pattern(), sketch(23), line(24),
  pattern(), pattern(), sketch(27), line(28),
  pattern(), pattern(), sketch(31), line(32),
  pattern(),
  { icon: "sew", label: "缝合 (34)", dim: true, bold: true },
];

const dots = { stroke: "#5a6a8c", strokeDasharray: "1 1" };

const RootGuide = ({ first, last, sign }) => (
  <svg width="20" height="18" viewBox="0 0 20 18" fill="none">
    <path d={`M10.500 ${first ? 9 : 0}V${last ? 9 : 18}M10 9.500h9`} {...dots} />
    {sign && <rect x="6.500" y="5.500" width="8" height="8" fill="#dfe7fb" stroke="#44588c" />}
    {sign && <path d={sign === "+" ? "M8 9.500h5M10.500 7v5" : "M8 9.500h5"} stroke="#2a3f80" />}
  </svg>
);

const ChildGuide = ({ last }) => (
  <svg width="41" height="18" viewBox="0 0 41 18" fill="none">
    <path d={`M29.500 0V${last ? 10 : 18}M31 9.500h8`} {...dots} />
  </svg>
);

const PartNavigator = () => (
  <Navigator>
    <NavTitle>
      <NavHeading>部件导航器</NavHeading>
      <CloseButton aria-label="关闭">x</CloseButton>
    </NavTitle>
    <NavBody>
      <Tree>
        <thead>
          <tr>
            <HeadCell $w={200}>名称<SortMark /></HeadCell>
            <HeadCell $w={100}>最新</HeadCell>
            <HeadCell $last>附注</HeadCell>
          </tr>
        </thead>
        <tbody>
          {roots.map((r, i) => (
            <tr key={r.label}>
              <Cell>
                <Node>
                  {r.sign ? (
                    <button aria-label={r.label}><RootGuide sign={r.sign} last={i === roots.length - 1} /></button>
                  ) : (
                    <RootGuide first />
                  )}
                  {r.checked && <Slot $w={14} $gap={1}><Icon name="check" size={14} /></Slot>}
                  <Slot $gap={r.checked ? 1 : 0}><Icon name={r.icon} /></Slot>
                  <NodeLabel as="span">{r.label}</NodeLabel>
                </Node>
              </Cell>
              <Cell />
              <Cell />
            </tr>
          ))}
          {features.map((f, i) => (
            <tr key={i}>
              <Cell>
                <Node $dim={f.dim} $bold={f.bold}>
                  <ChildGuide last={i === features.length - 1} />
                  <Tick type="checkbox" id={`feature-${i}`} defaultChecked />
                  <Slot $gap={2}><Icon name={f.icon} /></Slot>
                  <NodeLabel htmlFor={`feature-${i}`}>{f.label}</NodeLabel>
                </Node>
              </Cell>
              <Cell $pad={6}><Icon name="check" size={14} /></Cell>
              <Cell />
            </tr>
          ))}
        </tbody>
      </Tree>
      <TriadArea>
        <svg width="90" height="62" />
      </TriadArea>
      <ScrollRow>
        <ScrollButton aria-label="向左滚动"><svg width="8" height="8" viewBox="0 0 8 8" fill="none" stroke="#203a68" strokeWidth="2"><path d="M6 0 2 4l4 4" /></svg></ScrollButton>
        <ScrollTrack><ScrollThumb /></ScrollTrack>
        <ScrollButton aria-label="向右滚动"><svg width="8" height="8" viewBox="0 0 8 8" fill="none" stroke="#203a68" strokeWidth="2"><path d="m2 0 4 4-4 4" /></svg></ScrollButton>
      </ScrollRow>
    </NavBody>
    <NavFoot><Grip $cols={24} $rows={1} $step={5} $color="#8094b8" /></NavFoot>
  </Navigator>
);

/* ---------- model ---------- */

const edges = [
  "M1123 417 909 586 1132 643 1138 783 1494 737 1485 510 1123 417 1129 557 909 586 1138 783",
  "M1123 417 1264 538 1485 510 1352 615 1494 737 1271 679 1138 783",
  "M1132 643 1249 448",
];

const Model = () => (
  <Scene>
    <defs>
      <linearGradient id="tail" x1="0" y1="0" x2="0" y2="1">
        <stop offset="0" stopColor="#86ec7e" />
        <stop offset=".3" stopColor="#dcf890" />
        <stop offset=".4" stopColor="#ffffff" />
      </linearGradient>
    </defs>
    <g transform="translate(0 -34)" fill="none">
      <g shapeRendering="crispEdges">
        <rect x="0" y="344" width="1660" height="1" fill="#c4068f" />
        <rect x="1725" y="344" width="100%" height="1" fill="#c4068f" />
        <rect x="1692" y="34" width="1" height="278" fill="#b5009d" />
        <rect x="1692" y="377" width="1" height="88" fill="#8a10a0" />
        <rect x="1692" y="465" width="1" height="575" fill="url(#tail)" />
      </g>
      <g stroke="#4460ff" strokeWidth="2" strokeLinejoin="round">
        {edges.map((d) => <path key={d} d={d} />)}
      </g>
      <path d="m909 585 340-137" stroke="#10ff20" strokeWidth="2" />
      <g stroke="#0808e8">
        <path d="M1230 606 1117 577M1230 606 1241 512M1230 606l34-66" />
        <path d="m1166 589 6-53 65 16 18-36-6 54-64-17z" strokeDasharray="5 1" />
      </g>
      <g fill="#0000b0">
        <path d="m1102 574 17-1-2 7zM1243 501l3 13-6-1zM1268 534l-1 12-7-5z" />
      </g>
      <path d="m1166 589 19-36" stroke="#dcd8ff" strokeWidth="1.500" strokeDasharray="7 1" />
      <path d="M1227 606h6M1192 542h3" stroke="#e8e8ff" />
      <g fill="#1010d8" fontFamily="Liberation Sans, sans-serif" fontSize="12">
        <text x="1239" y="499">X</text><text x="1265" y="534">Y</text><text x="1092" y="577">Z</text>
      </g>
      <g fill="#ff3838">
        <path d="M1051 623 1045 639 1042 636 906 763 905 762 1038 632 1034 629z" />
        <path d="M1207 522 1223 531 1220 534 1449 857 1448 858 1213 538 1210 540z" />
      </g>
      <g>
        <path d="m57 913 31 7-5 42-38-9 3-25z" fill="#d6d8dc" />
        <path d="M76 962 30 951" stroke="#2030d0" strokeWidth="2" />
        <path d="m25 949 21 5-6 1z" fill="#1040f0" />
        <path d="M76 961l12-24" stroke="#20b840" strokeWidth="2" />
        <path d="m90 933-6 12 4 2z" fill="#20b840" />
        <path d="m75 960 4-29" stroke="#a81818" strokeWidth="4" />
        <path d="m80 921 3 12h-8z" fill="#a81818" />
        <circle cx="75" cy="962" r="4" fill="#ffffff" />
        <g fontFamily="Liberation Sans, sans-serif" fontSize="11">
          <text x="77" y="920" fill="#f02850">X</text><text x="88" y="934" fill="#28b830">Y</text><text x="18" y="952" fill="#0840ff">Z</text>
        </g>
      </g>
    </g>
  </Scene>
);

const Logo = () => (
  <svg width="72" height="82" viewBox="0 0 72 82">
    <path d="M36 0 15 12q22 0 40 16Q54 12 48 7z" fill="#6cacd8" />
    <path d="M15 13 0 21v25q12-20 34-27Q26 13 15 13z" fill="#56a4d8" />
    <path d="M0 49v13l22 12Q12 52 17 31 6 37 0 49z" fill="#3c98d4" />
    <path d="M17 54q4 17 14 24l5 4 21-12Q34 70 17 54z" fill="#1490d4" />
    <path d="M57 69l15-9V35Q62 56 38 62q10 6 19 7z" fill="#1284cc" />
    <path d="M50 8l22 12v12Q66 48 56 52V28Q56 16 50 8z" fill="#2890d4" />
    <path d="m36 23 16 9-16 9-16-9z" fill="#6cacd8" />
    <path d="m20 33 15 9v17l-15-9z" fill="#4a9cd4" />
    <path d="m52 33-15 9v17l15-9z" fill="#1284cc" />
  </svg>
);

export default function App() {
  return (
    <Page>
      <GlobalStyle />
      <TopStrip><Grip $cols={16} $rows={2} $step={5} $color="#98a4ae" /></TopStrip>
      <BarStrip>
        <BarPane $first $width={874} />
        <BarPane $flex="1" />
        <BarPane $width={20} />
        <BarPane $width={76}>
          <FlagButton aria-label="完成草图">
            <svg width="16" height="16" viewBox="0 0 16 16"><path d="M2 3q3-1 5 0t6 0v7q-3 1-5 0t-4 0l1 4" fill="#7fa8bc" stroke="#5c8498" /><path d="M4 3h2v2H4zM8 3h2v2H8zM6 5h2v2H6zM10 5h2v2h-2zM4 7h2v2H4zM8 7h2v2H8z" fill="#4c7488" /></svg>
          </FlagButton>
          <FullButton $w={20} $h={19} $edge="#c48a20" $fill="#ffcf70" aria-label="全屏"><FullGlyph /></FullButton>
        </BarPane>
        <BarPane $last $width={16} />
        <WindowButtons>
          <WindowButton aria-label="最小化"><svg width="8" height="8"><path d="M1 6h6" stroke="#6c7880" strokeWidth="2" /></svg></WindowButton>
          <WindowButton aria-label="还原"><svg width="9" height="9" fill="none" stroke="#6c7880"><path d="M3 3V1h5v4H6" strokeWidth="1.500" /><path d="M1 4h5v4H1z" strokeWidth="1.500" /></svg></WindowButton>
          <WindowButton aria-label="关闭"><svg width="8" height="8"><path d="m1 1 6 6M7 1 1 7" stroke="#6c7880" strokeWidth="2" /></svg></WindowButton>
        </WindowButtons>
      </BarStrip>
      <Viewport>
        <Model />
        <Note>这两条线长度要相等</Note>
        <Watermark>
          <Logo />
          <WatermarkText>
            <WatermarkName><b>3D</b>世界网</WatermarkName>
            <WatermarkUrl>WWW.3DSJW.COM</WatermarkUrl>
          </WatermarkText>
        </Watermark>
        <PartNavigator />
        <RibbonBar />
      </Viewport>
      <Taskbar><Clock>下午 1:31:38</Clock></Taskbar>
    </Page>
  );
}
